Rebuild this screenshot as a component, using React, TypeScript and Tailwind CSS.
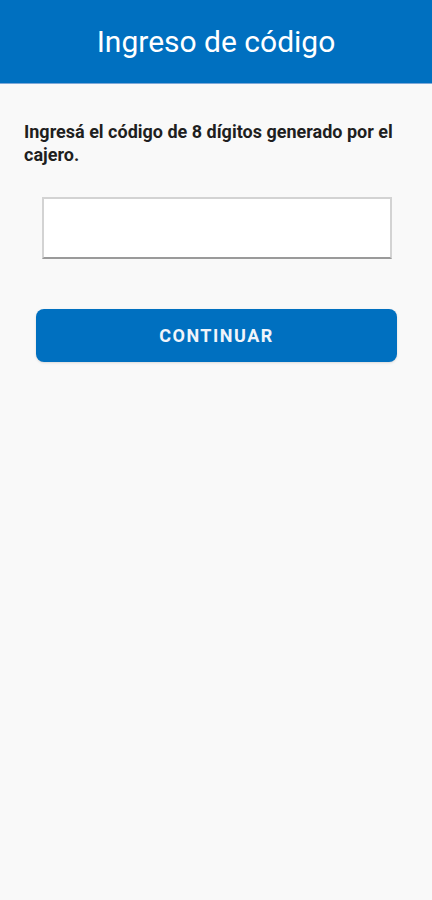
import React from "react";

export default function App() {
  return (
    <div className="flex min-h-[900px] w-full flex-col bg-[#f9f9f9] font-['Roboto',sans-serif]">
      <header className="flex h-[84px] items-center justify-center border-b border-[#7fa9d8] bg-[#0070c0]">
        <h1 className="text-[30px] font-normal text-white">Ingreso de código</h1>
      </header>
      <main className="flex flex-col px-6 pt-[36px]">
        <p className="pr-2 text-[18px] leading-[23px] font-bold text-[#1f1f1f]">
          Ingresá el código de 8 dígitos generado por el cajero.
        </p>
        <div className="mt-[31px] px-[18px]">
          <input
            type="text"
            className="box-border block h-[62px] w-[350px] border-2 border-[#d3d3d3] border-b-[#9a9a9a] bg-white outline-none"
          />
        </div>
        <button className="mt-[50px] ml-3 flex h-[53px] w-[361px] items-center justify-center rounded-lg bg-[#0070c0] text-[18px] font-bold tracking-[1.5px] text-[#f0f4fa] shadow-sm">
          CONTINUAR
        </button>
      </main>
    </div>
  );
}
